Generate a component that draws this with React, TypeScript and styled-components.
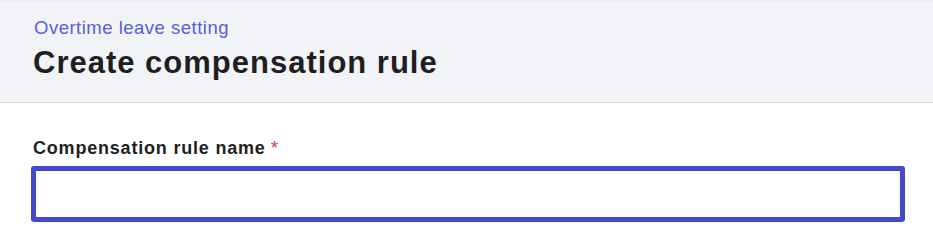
import React from 'react'
import styled, { createGlobalStyle } from 'styled-components'

const GlobalStyle = createGlobalStyle`
  html, body {
    margin: 0;
    padding: 0;
    background: #ffffff;
    font-family: "Liberation Sans", Arial, sans-serif;
  }
`

const Header = styled.header`
  background: #f2f3f7;
  border-top: 2px solid #ebecf0;
  border-bottom: 1px solid #d6d9df;
  padding: 15px 33px 0;
  height: 85px;
`

const Breadcrumb = styled.a`
  display: block;
  color: #5560dd;
  font-size: 18.5px;
  line-height: 22px;
  letter-spacing: 0.5px;
  text-decoration: none;
  margin-left: 1px;
`

const Title = styled.h1`
  margin: 6px 0 0;
  color: #1f1f23;
  font-size: 31px;
  line-height: 36px;
  font-weight: 700;
  letter-spacing: 1px;
`

const Body = styled.main`
  padding: 35px 28px 0 31px;
`

const Field = styled.div`
  display: flex;
  flex-direction: column;
  gap: 7px;
`

const Label = styled.label`
  display: block;
  height: 21px;
  color: #1f1f23;
  font-size: 18px;
  line-height: 21px;
  font-weight: 700;
  padding-left: 2px;
  letter-spacing: 0.8px;
`

const Required = styled.span`
  color: #d9413c;
  margin-left: 5px;
  font-size: 19px;
  line-height: 1;
  font-weight: 400;
`

const TextInput = styled.input`
  box-sizing: border-box;
  width: 874px;
  height: 56px;
  border: 5px solid #434bcc;
  border-radius: 3px;
  outline: none;
  background: #ffffff;
  font-family: inherit;
  font-size: 16px;
  padding: 0 12px;
`

const App = () => {
  return (
    <>
      <GlobalStyle />
      <Header>
        <Breadcrumb href="#">Overtime leave setting</Breadcrumb>
        <Title>Create compensation rule</Title>
      </Header>
      <Body>
        <Field>
          <Label htmlFor="rule-name">
            Compensation rule name<Required>*</Required>
          </Label>
          <TextInput id="rule-name" type="text" />
        </Field>
      </Body>
    </>
  )
}

export default App
